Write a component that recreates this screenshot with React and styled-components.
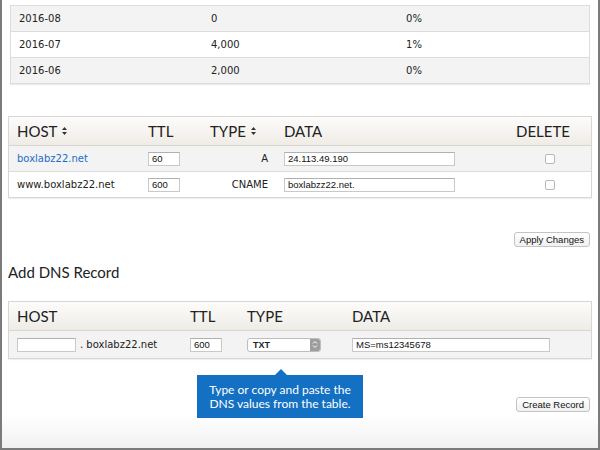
import React from 'react';
import styled, { createGlobalStyle } from 'styled-components';

const GlobalStyle = createGlobalStyle`
  body {
    margin: 0;
    font-family: "DejaVu Sans", Verdana, sans-serif;
    color: #222;
  }
`;

const Frame = styled.div`
  width: 600px;
  height: 450px;
  box-sizing: border-box;
  border: 2px solid #7b7b7b;
  border-top: none;
  padding: 0 6px;
  overflow: hidden;
  background: linear-gradient(to bottom, #fff 0, #fff 414px, #f1f1f1 100%);
`;

const UsageTable = styled.div`
  margin: 5px 2px 0 2px;
  border: 1px solid #dcdcdc;
  box-shadow: 0 1px 1px rgba(0, 0, 0, 0.08);
`;

const UsageRow = styled.div`
  display: grid;
  grid-template-columns: 192px 127px 160px 1fr;
  align-items: center;
  height: 25px;
  font-size: 10px;
  background: ${p => (p.$shade ? '#f3f3f3' : '#fff')};
  border-bottom: 1px solid #dcdcdc;
  &:last-child { border-bottom: none; }
`;

const UsageCell = styled.div`
  padding-left: 8px;
  text-align: ${p => (p.$center ? 'center' : 'left')};
`;

const Table = styled.div`
  margin-top: ${p => p.$top || 0}px;
  border: 1px solid #d6d6d6;
  box-shadow: 0 1px 1px rgba(0, 0, 0, 0.06);
`;

const HeadRow = styled.div`
  display: grid;
  grid-template-columns: ${p => p.$cols};
  align-items: center;
  height: 28px;
  border-bottom: 1px solid #d9d6d0;
  background: linear-gradient(to bottom, #fdfcfb, #efece6);
  font-family: Lato, "Open Sans", sans-serif;
  font-size: 15px;
  color: #222;
`;

const HeadCell = styled.div`
  padding: 0 8px;
  display: flex;
  align-items: center;
  gap: 5px;
`;

const Row = styled.div`
  display: grid;
  grid-template-columns: ${p => p.$cols};
  align-items: center;
  height: ${p => p.$h || 25}px;
  font-size: 10px;
  background: ${p => (p.$shade ? '#f3f3f3' : '#fff')};
  border-bottom: 1px solid #dcdcdc;
  &:last-child { border-bottom: none; }
`;

const Cell = styled.div`
  padding: 0 8px;
  display: flex;
  align-items: center;
  justify-content: ${p => p.$justify || 'flex-start'};
  gap: 4px;
  white-space: nowrap;
`;

const Link = styled.a`
  color: #1a6ec8;
  text-decoration: none;
`;

const Field = styled.div`
  width: ${p => p.$w}px;
  height: 14px;
  box-sizing: border-box;
  border: 1px solid #c9c9c9;
  border-top-color: #b0b0b0;
  background: #fff;
  font-family: "Liberation Sans", Arial, sans-serif;
  font-size: 9.5px;
  line-height: 12px;
  padding: 0 3px;
  color: #111;
`;

const Check = styled.span`
  width: 10px;
  height: 10px;
  box-sizing: border-box;
  border: 1px solid #b8b8b8;
  border-radius: 2px;
  background: #fff;
`;

const ButtonRow = styled.div`
  display: flex;
  justify-content: flex-end;
  padding-right: 2px;
  margin-top: ${p => p.$top || 0}px;
`;

const Button = styled.button`
  height: 15px;
  padding: 0 5px;
  border: 1px solid #c4c4c4;
  border-radius: 3px;
  background: linear-gradient(to bottom, #fff, #f0f0f0);
  font-family: "Liberation Sans", Arial, sans-serif;
  font-size: 9.5px;
  line-height: 13px;
  color: #111;
`;

const Heading = styled.h2`
  margin: 16px 0 0 0;
  font-family: Lato, "Open Sans", sans-serif;
  font-weight: 400;
  font-size: 15px;
  line-height: 18px;
  color: #222;
`;

const Select = styled.div`
  width: 74px;
  height: 14px;
  box-sizing: border-box;
  border: 1px solid #bdbdbd;
  border-radius: 3px;
  background: #fff;
  display: flex;
  align-items: center;
  justify-content: space-between;
  overflow: hidden;
  font-family: "Liberation Sans", Arial, sans-serif;
  font-size: 9px;
  font-weight: 700;
  padding-left: 5px;
  color: #222;
`;

const Stepper = styled.span`
  width: 10px;
  height: 100%;
  background: #9d9d9d;
  display: flex;
  align-items: center;
  justify-content: center;
`;

const Footer = styled.div`
  position: relative;
  padding-top: 38px;
`;

const Tooltip = styled.div`
  position: absolute;
  left: 189px;
  top: 16px;
  width: 166px;
  height: 43px;
  box-sizing: border-box;
  background: #1470c2;
  color: #fff;
  font-family: Lato, "Open Sans", sans-serif;
  font-size: 12px;
  line-height: 13.5px;
  text-align: center;
  padding-top: 8px;
  &::before {
    content: '';
    position: absolute;
    left: 78px;
    top: -6px;
    border-left: 6px solid transparent;
    border-right: 6px solid transparent;
    border-bottom: 6px solid #1470c2;
  }
`;

const SortIcon = () => (
  <svg width="5" height="8" viewBox="0 0 5 8">
    <path d="M2.5 0 L5 3 L0 3 Z M2.5 8 L5 5 L0 5 Z" fill="#333" />
  </svg>
);

const usage = [
  ['2016-08', '0', '0%'],
  ['2016-07', '4,000', '1%'],
  ['2016-06', '2,000', '0%'],
];

const dnsCols = '131px 62px 74px 232px 1fr';
const addCols = '173px 57px 105px 1fr';

const records = [
  { host: 'boxlabz22.net', link: true, ttl: '60', type: 'A', data: '24.113.49.190' },
  { host: 'www.boxlabz22.net', ttl: '600', type: 'CNAME', data: 'boxlabzz22.net.' },
];

export default function App() {
  return (
    <>
      <GlobalStyle />
      <Frame>
        <UsageTable>
          {usage.map((r, i) => (
            <UsageRow key={r[0]} $shade={i % 2 === 0}>
              <UsageCell>{r[0]}</UsageCell>
              <UsageCell>{r[1]}</UsageCell>
              <UsageCell $center>{r[2]}</UsageCell>
              <UsageCell />
            </UsageRow>
          ))}
        </UsageTable>

        <Table $top={32}>
          <HeadRow $cols={dnsCols}>
            <HeadCell>HOST <SortIcon /></HeadCell>
            <HeadCell>TTL</HeadCell>
            <HeadCell>TYPE <SortIcon /></HeadCell>
            <HeadCell>DATA</HeadCell>
            <HeadCell>DELETE</HeadCell>
          </HeadRow>
          {records.map((r, i) => (
            <Row key={r.host} $cols={dnsCols} $shade={i === 0}>
              <Cell>{r.link ? <Link href="#">{r.host}</Link> : r.host}</Cell>
              <Cell><Field $w={32}>{r.ttl}</Field></Cell>
              <Cell $justify="flex-end">{r.type}</Cell>
              <Cell><Field $w={171}>{r.data}</Field></Cell>
              <Cell $justify="center"><Check /></Cell>
            </Row>
          ))}
        </Table>

        <ButtonRow $top={34}>
          <Button>Apply Changes</Button>
        </ButtonRow>

        <Heading>Add DNS Record</Heading>

        <Table $top={20}>
          <HeadRow $cols={addCols}>
            <HeadCell>HOST</HeadCell>
            <HeadCell>TTL</HeadCell>
            <HeadCell>TYPE</HeadCell>
            <HeadCell>DATA</HeadCell>
          </HeadRow>
          <Row $cols={addCols} $shade $h={27}>
            <Cell><Field $w={59} /> . boxlabz22.net</Cell>
            <Cell><Field $w={32}>600</Field></Cell>
            <Cell>
              <Select>
                TXT
                <Stepper>
                  <svg width="6" height="9" viewBox="0 0 6 9">
                    <path d="M1 3.5 L3 1.5 L5 3.5 M1 5.5 L3 7.5 L5 5.5" fill="none" stroke="#fff" strokeWidth="1" />
                  </svg>
                </Stepper>
              </Select>
            </Cell>
            <Cell><Field $w={198}>MS=ms12345678</Field></Cell>
          </Row>
        </Table>

        <Footer>
          <ButtonRow>
            <Button>Create Record</Button>
          </ButtonRow>
          <Tooltip>
            Type or copy and paste the
            <br />
            DNS values from the table.
          </Tooltip>
        </Footer>
      </Frame>
    </>
  );
}
